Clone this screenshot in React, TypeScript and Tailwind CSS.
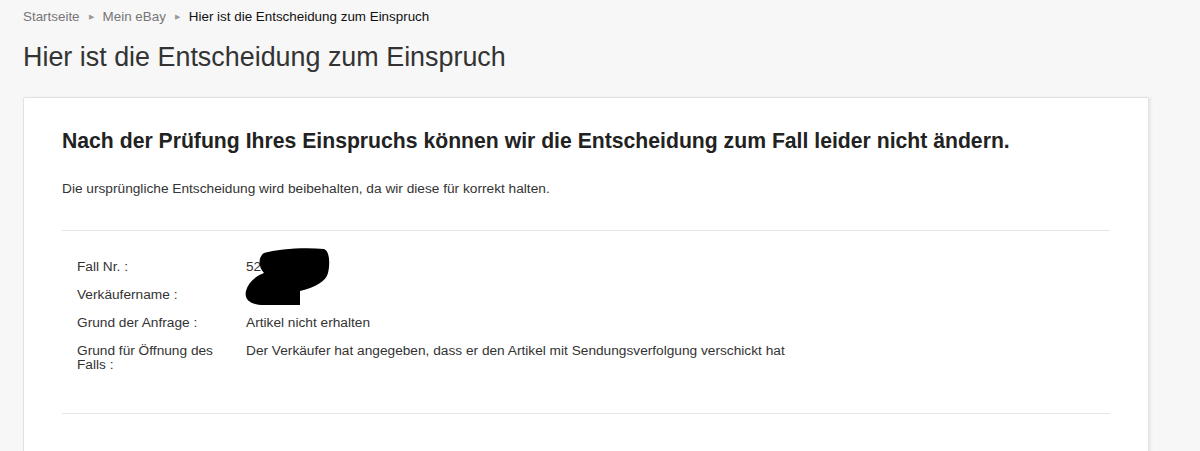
const rows = [
  { label: "Fall Nr. :", value: "52" },
  { label: "Verkäufername :", value: "" },
  { label: "Grund der Anfrage :", value: "Artikel nicht erhalten" },
  {
    label: "Grund für Öffnung des Falls :",
    value: "Der Verkäufer hat angegeben, dass er den Artikel mit Sendungsverfolgung verschickt hat",
  },
];

const Redaction = () => (
  <svg className="absolute left-[-2px] top-[-13px]" width="88" height="60" viewBox="0 0 88 60">
    <path
      d="M20 6 C34 2 60 0 80 2 C86 4 86 18 84 26 C82 34 72 40 56 44 L56 58 L20 58 C6 58 0 52 2 44 C4 36 10 30 20 26 C14 20 14 10 20 6 Z"
      fill="#000"
    />
  </svg>
);

export default function App() {
  return (
    <div className="min-h-[451px] bg-[#f7f7f7] font-['Liberation_Sans',Arial,sans-serif] text-[#333] px-[23px] pt-[9px]">
      {/* Breadcrumb */}
      <nav className="flex items-center gap-[9px] text-[13.4px] leading-[16px]">
        <span className="text-[#767676]">Startseite</span>
        <span className="text-[7px] text-[#999]">▶</span>
        <span className="text-[#767676]">Mein eBay</span>
        <span className="text-[7px] text-[#999]">▶</span>
        <span className="text-[#111]">Hier ist die Entscheidung zum Einspruch</span>
      </nav>

      <h1 className="mt-[17px] text-[26.9px] leading-[30px] text-[#333]">Hier ist die Entscheidung zum Einspruch</h1>

      {/* Card */}
      <div className="mt-[25px] w-[1126px] bg-white border border-[#e2e2e2] rounded-[2px] shadow-[2px_0_3px_rgba(0,0,0,0.06)] px-[38px] pt-[31px] pb-[40px]">
        <h2 className="text-[21.2px] leading-[24px] font-bold text-[#222]">
          Nach der Prüfung Ihres Einspruchs können wir die Entscheidung zum Fall leider nicht ändern.
        </h2>
        <p className="mt-[28px] text-[13.7px] leading-[16px] text-[#333]">
          Die ursprüngliche Entscheidung wird beibehalten, da wir diese für korrekt halten.
        </p>

        <div className="mt-[33px] border-t border-[#e5e5e5]" />

        <div className="pl-[15px] pt-[29px] flex flex-col gap-[14px] text-[13.7px] leading-[14px] text-[#333]">
          {rows.map((row, i) => (
            <div key={i} className="flex">
              <div className="w-[169px] pr-[20px]">{row.label}</div>
              <div className="relative">
                {row.value}
                {i === 0 && <Redaction />}
              </div>
            </div>
          ))}
        </div>

        <div className="mt-[41px] border-t border-[#e5e5e5]" />
      </div>
    </div>
  );
}
